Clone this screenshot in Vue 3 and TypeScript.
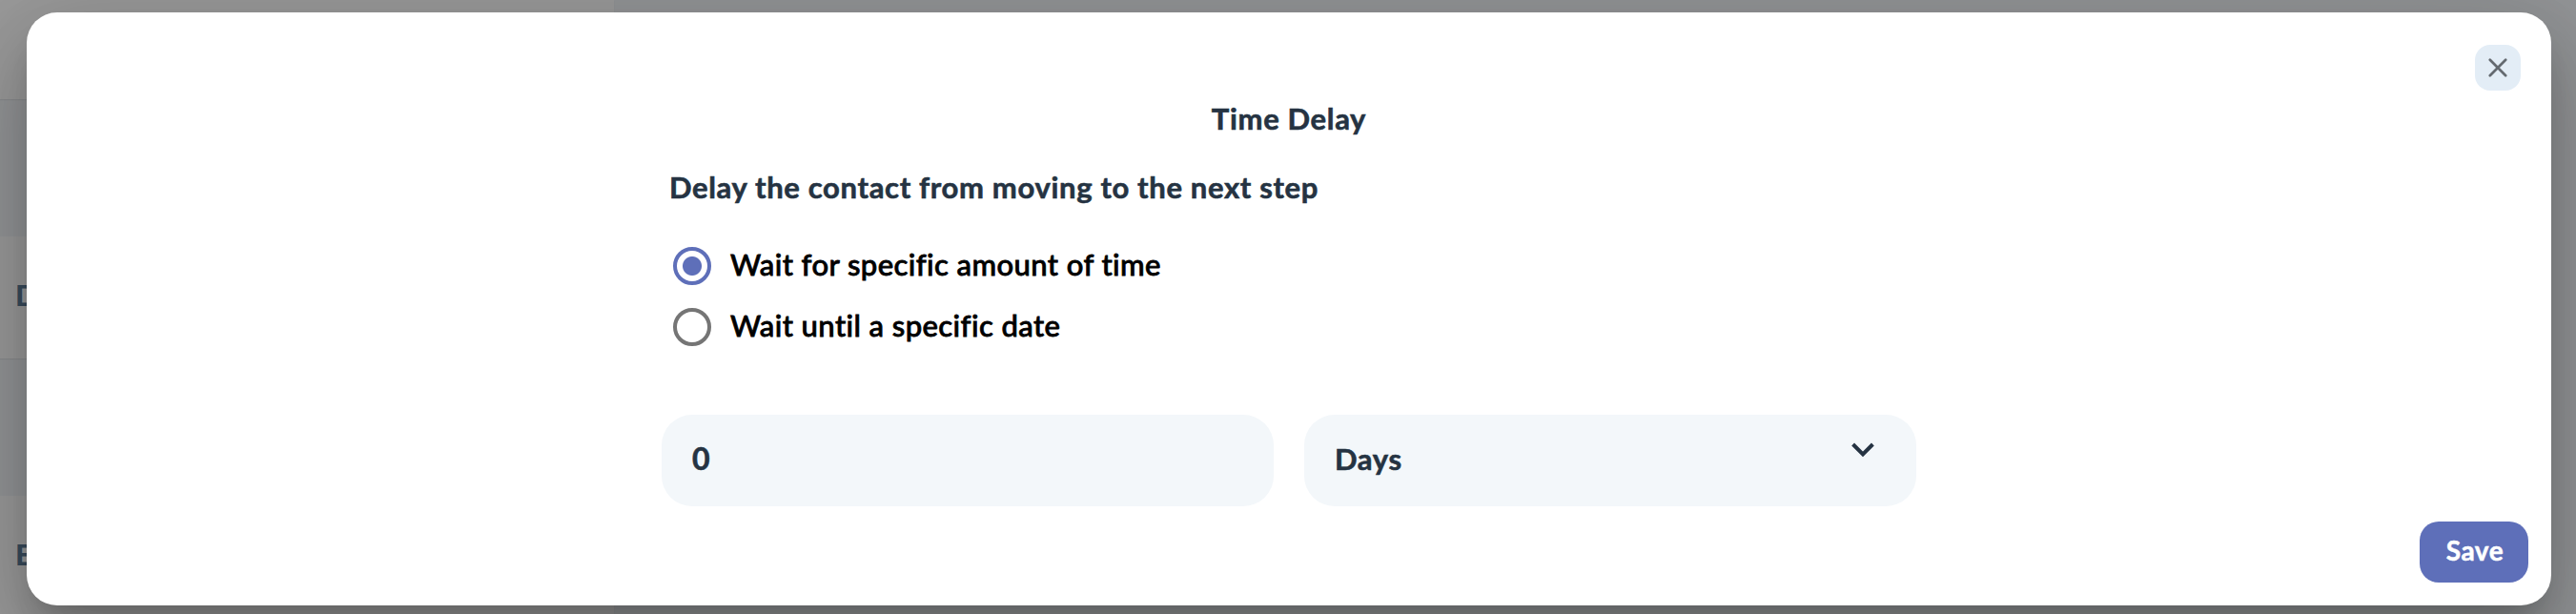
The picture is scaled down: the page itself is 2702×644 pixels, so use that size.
<script setup lang="ts">
import { ref } from 'vue'

interface DelayOption {
  id: string
  label: string
}

const options: DelayOption[] = [
  { id: 'amount', label: 'Wait for specific amount of time' },
  { id: 'date', label: 'Wait until a specific date' },
]
const selected = ref<string>('amount')
const amount = ref<number>(0)
const unit = ref<string>('Days')
</script>

<template>
  <div class="page">
    <div class="backdrop">
      <div class="side">
        <div class="block head"></div>
        <div class="block"><span>Delay</span></div>
        <div class="block"><span>Email</span></div>
      </div>
    </div>
    <section class="modal" role="dialog" aria-label="Time Delay">
      <header class="top">
        <button class="close" aria-label="Close">
          <svg width="20" height="20" viewBox="0 0 20 20">
            <path d="M1.8 1.8 18.2 18.2M18.2 1.8 1.8 18.2" fill="none" stroke="#646a70" stroke-width="2.7" stroke-linecap="round" />
          </svg>
        </button>
      </header>
      <h1 class="title">Time Delay</h1>
      <div class="content">
        <p class="lead">Delay the contact from moving to the next step</p>
        <div class="options">
          <div
            v-for="o in options"
            :key="o.id"
            class="option"
            :class="{ on: selected === o.id }"
            @click="selected = o.id"
          >
            <span class="radio"></span>
            <span class="label">{{ o.label }}</span>
          </div>
        </div>
        <div class="fields">
          <div class="field"><span class="value number">{{ amount }}</span></div>
          <div class="field">
            <span class="value">{{ unit }}</span>
            <svg class="chevron" width="26" height="17" viewBox="0 0 26 17">
              <path d="M2.6 3 13 13.4 23.4 3" fill="none" stroke="#253342" stroke-width="4" />
            </svg>
          </div>
        </div>
      </div>
      <footer class="bottom"><button class="save">Save</button></footer>
    </section>
  </div>
</template>

<style>
body {
  margin: 0;
  overflow: hidden;
}
</style>

<style scoped>
.page {
  position: relative;
  width: 2702px;
  height: 644px;
  overflow: hidden;
  box-sizing: border-box;
  padding: 13px 26px 9px 28px;
  font-family: Lato, "Liberation Sans", sans-serif;
  color: #253342;
}
.backdrop {
  position: absolute;
  inset: 0;
  background: #929496;
}
.side {
  width: 644px;
}
.block {
  height: 128px;
  margin-bottom: 144px;
  background: #999;
  box-shadow: 0 1px 1px rgba(0, 0, 0, 0.06);
  box-sizing: border-box;
  padding: 45px 0 0 16px;
  font-size: 31px;
  line-height: 32px;
  font-weight: 900;
  color: #384b5c;
}
.head {
  height: 104px;
}
.modal {
  position: relative;
  height: 622px;
  border-radius: 32px;
  background: #fff;
  box-shadow: 0 22px 30px -14px rgba(0, 0, 0, 0.2), 0 48px 76px 6px rgba(0, 0, 0, 0.14),
    0 18px 92px 16px rgba(0, 0, 0, 0.12);
  display: flex;
  flex-direction: column;
}
.top {
  display: flex;
  justify-content: flex-end;
  padding: 34px 32px 0 0;
}
button {
  border: 0;
  padding: 0;
  font-family: inherit;
  display: flex;
  align-items: center;
  justify-content: center;
}
.close {
  width: 48px;
  height: 48px;
  border-radius: 16px;
  background: #e3edf6;
}
.title,
.lead,
.value {
  font-size: 31px;
  line-height: 36px;
  font-weight: 700;
  letter-spacing: 0.66px;
  -webkit-text-stroke: 0.6px currentColor;
}
.title {
  margin: 11px 0 0;
  text-align: center;
}
.content {
  margin: 36px 0 0 666px;
  width: 1316px;
}
.lead {
  margin: 0 0 0 8px;
}
.options {
  display: flex;
  flex-direction: column;
  gap: 24px;
  margin: 45px 0 0 12px;
}
.option {
  display: flex;
  align-items: center;
  gap: 20px;
  height: 40px;
  color: #000;
}
.radio {
  width: 40px;
  height: 40px;
  box-sizing: border-box;
  border: 4px solid #757575;
  border-radius: 50%;
}
.on .radio {
  border-color: #5e6fb9;
  background: radial-gradient(circle, #5e6fb9 9.5px, #fff 10.5px);
}
.label {
  font-size: 31px;
  line-height: 36px;
  font-weight: 500;
  letter-spacing: 0.42px;
  padding-bottom: 5px;
  -webkit-text-stroke: 0.8px #000;
}
.fields {
  display: flex;
  gap: 32px;
  margin-top: 72px;
}
.field {
  width: 642px;
  height: 96px;
  border-radius: 32px;
  background: #f3f7fa;
  box-sizing: border-box;
  padding: 0 43px 0 32px;
  display: flex;
  align-items: center;
  justify-content: space-between;
}
.value {
  padding-bottom: 5px;
}
.number {
  font-size: 32px;
}
.chevron {
  margin-bottom: 23px;
}
.bottom {
  display: flex;
  justify-content: flex-end;
  padding: 16px 24px 0 0;
}
.save {
  width: 114px;
  height: 64px;
  box-sizing: border-box;
  padding: 0 0 4px 2px;
  border-radius: 20px;
  background: #5e6fb9;
  color: #fff;
  font-size: 28px;
  font-weight: 700;
  letter-spacing: 0.6px;
  -webkit-text-stroke: 0.5px #fff;
}
</style>
